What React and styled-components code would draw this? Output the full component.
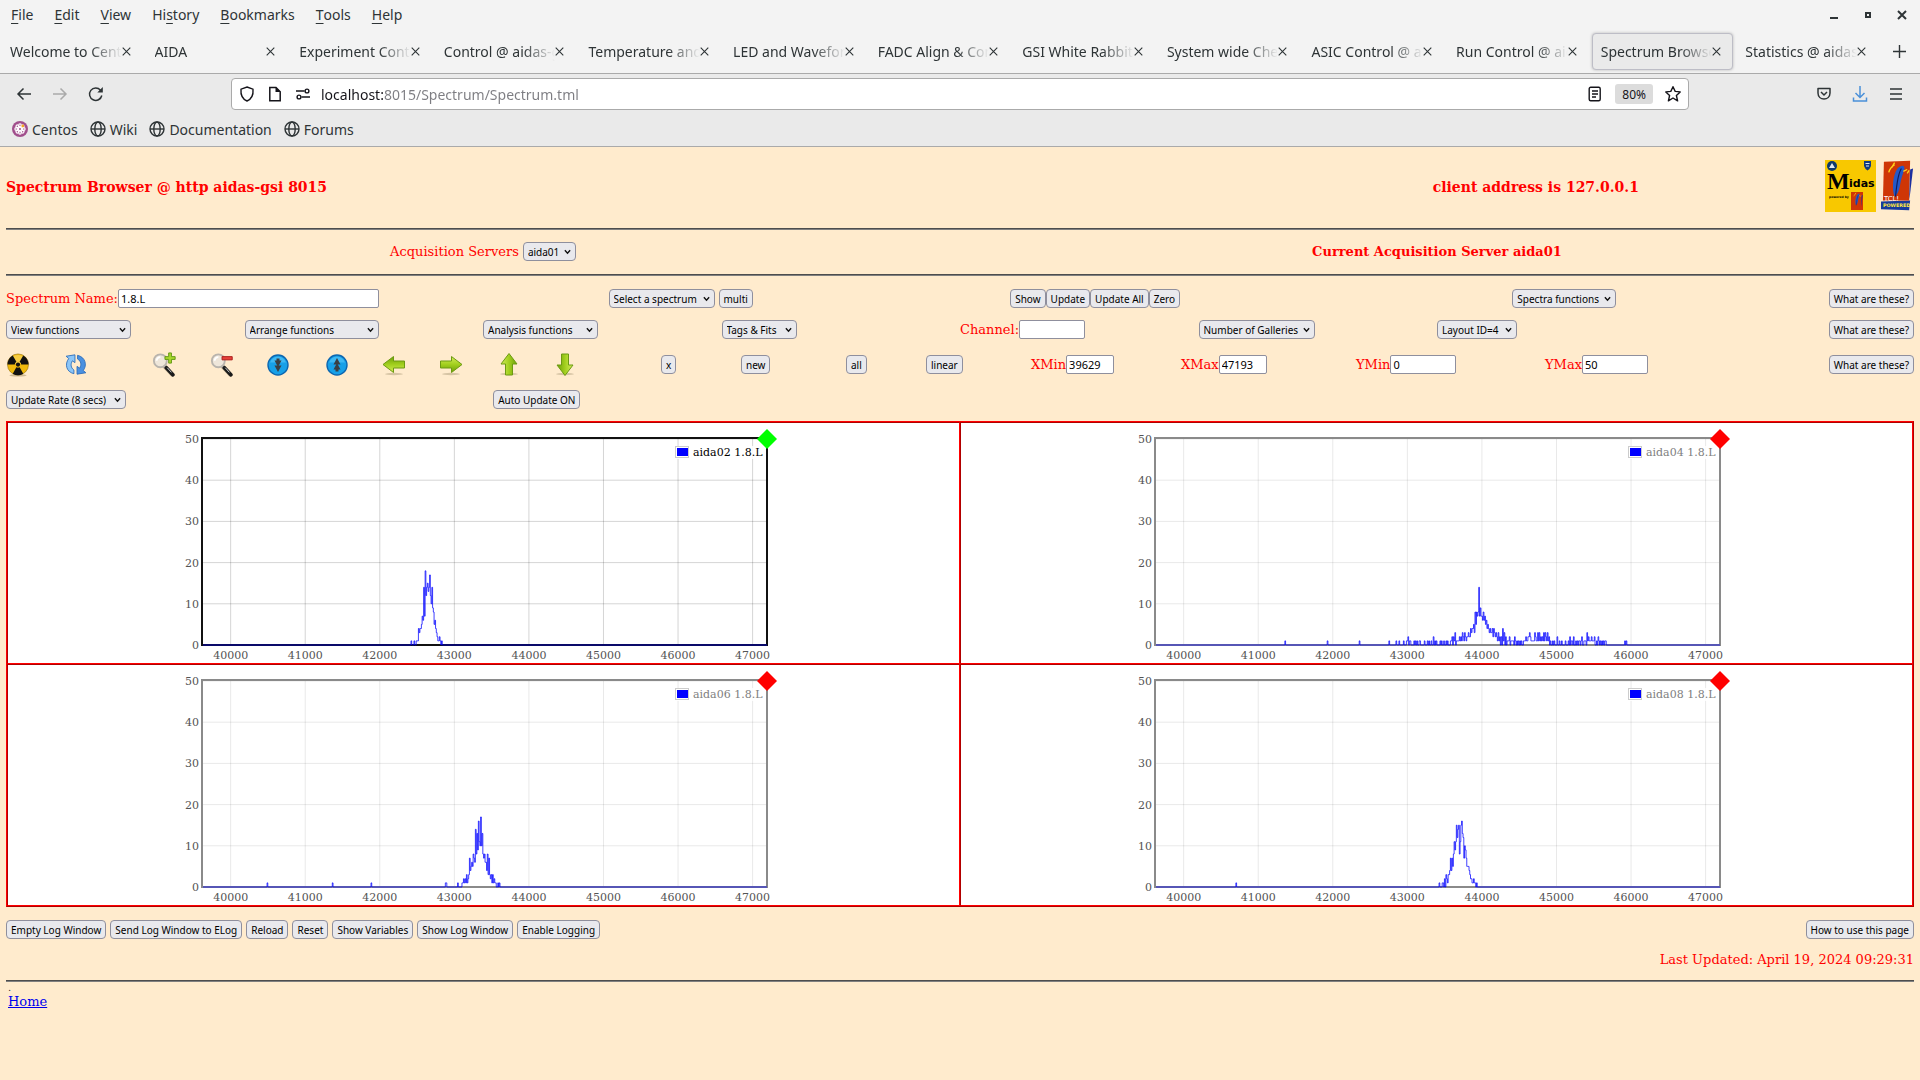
import React from "react";
import styled, { createGlobalStyle } from "styled-components";

const AXIS = { xMin: 39629, xMax: 47193, yMax: 50 };
const PLOT = { left: 20, top: 16, width: 564, height: 206 };
const BIN = 10;

const TABS = [
    "Welcome to CentOS",
    "AIDA",
    "Experiment Control",
    "Control @ aidas-gsi",
    "Temperature and status",
    "LED and Waveform",
    "FADC Align & Control",
    "GSI White Rabbit",
    "System wide Checks",
    "ASIC Control @ aidas",
    "Run Control @ aidas",
    "Spectrum Browser",
    "Statistics @ aidas-gsi",
];

const MENUS = [
    ["", "F", "ile"],
    ["", "E", "dit"],
    ["", "V", "iew"],
    ["Hi", "s", "tory"],
    ["", "B", "ookmarks"],
    ["", "T", "ools"],
    ["", "H", "elp"],
];

// each run is a first channel followed by the counts of the bins after it
const SPECTRA = [
    {
        name: "aida02 1.8.L",
        active: true,
        runs: [
            [42418, [1, 0, 0, 0, 1, 0, 0, 1, 1, 1, 4, 3, 4, 4, 5, 7, 6, 14, 7, 18, 12, 14, 15, 13, 14, 17, 12, 10, 14, 9, 8, 5, 6, 4, 3, 2, 1, 1, 2, 1, 0, 1]],
        ],
    },
    {
        name: "aida04 1.8.L",
        runs: [
            [41357, [1]],
            [41925, [1]],
            [42354, [1]],
            [42752, [1]],
            [42837, [
                0, 1, 0, 0, 0, 1, 0, 0, 0, 0, 0, 1, 0, 0, 0, 1, 1, 2, 0, 1, 1, 0, 0, 0, 0,
                1, 0, 1, 0, 1, 0, 0, 1, 1, 0, 0, 0, 0, 0, 1, 0, 0, 0, 1, 0, 1, 0, 0, 1, 0,
                0, 2, 0, 1, 0, 1, 0, 0, 0, 0, 1, 0, 1, 0, 0, 1, 0, 0, 1, 0, 1, 0, 0, 0, 1,
                1, 2, 0, 2, 1, 3, 0, 1, 1, 1, 1, 2, 1, 2, 1, 3, 2, 1, 3, 2, 1, 2, 2, 3, 2,
                2, 4, 3, 4, 4, 5, 3, 8, 5, 8, 7, 8, 14, 7, 9, 7, 7, 6, 8, 6, 7, 5, 6, 4, 5,
                4, 3, 4, 3, 3, 4, 2, 4, 3, 2, 3, 2, 1, 3, 1, 2, 0, 2, 0, 4, 1, 3, 0, 2, 0,
                1, 1, 1, 2, 0, 1, 1, 1, 1, 0, 2, 1, 0, 1, 0, 1, 0, 1, 0, 1, 0, 0, 1, 1, 1,
                2, 1, 1, 2, 2, 3, 2, 1, 1, 1, 1, 1, 3, 2, 1, 1, 3, 1, 3, 1, 2, 1, 2, 1, 3,
                1, 3, 2, 1, 3, 1, 2, 0, 1, 0, 0, 1, 0, 1, 0, 0, 0, 2, 0, 0, 1, 0, 0, 1, 0,
                0, 0, 0, 1, 0, 0, 0, 1, 0, 2, 0, 1, 1, 0, 2, 0, 0, 1, 0, 1, 0, 1, 1, 0, 1,
                2, 0, 0, 1, 1, 1, 0, 3, 1, 2, 1, 1, 1, 2, 1, 1, 1, 2, 0, 0, 1, 0, 2, 1, 0,
                1, 0, 1, 0, 1, 0, 1, 1, 0,
            ]],
            [45914, [1, 0, 1]],
        ],
    },
    {
        name: "aida06 1.8.L",
        runs: [
            [40488, [1]],
            [41363, [1]],
            [41882, [1]],
            [42879, [1, 1]],
            [43043, [1]],
            [43102, [1, 1, 2, 1, 2, 1, 3, 1, 2, 3, 7, 4, 5, 6, 5, 8, 7, 6, 14, 8, 13, 9, 16, 11, 10, 17, 10, 13, 8, 7, 8, 6, 6, 4, 8, 3, 7, 3, 2, 3, 1, 3, 1, 2, 1, 1, 0, 0, 1, 0, 1]],
        ],
    },
    {
        name: "aida08 1.8.L",
        runs: [
            [40700, [1]],
            [43425, [1]],
            [43457, [0, 1, 1, 0, 2, 0, 3, 2, 1, 3, 3, 4, 7, 4, 7, 5, 8, 11, 9, 11, 15, 12, 14, 15, 8, 11, 15, 16, 13, 12, 7, 10, 9, 7, 5, 5, 5, 4, 3, 2, 2, 1, 1, 2, 1, 1, 0, 1]],
        ],
    },
];

const xOf = (channel) => PLOT.left + ((channel - AXIS.xMin) / (AXIS.xMax - AXIS.xMin)) * PLOT.width;
const yOf = (count) => PLOT.top + PLOT.height - (count / AXIS.yMax) * PLOT.height;

function stepPath(runs) {
    let d = `M${xOf(AXIS.xMin)} ${yOf(0)}`;
    runs.forEach(([start, counts]) => {
        counts.forEach((count, i) => {
            d += `H${xOf(start + i * BIN).toFixed(2)}V${yOf(count).toFixed(2)}`;
        });
        d += `H${xOf(start + counts.length * BIN).toFixed(2)}V${yOf(0)}`;
    });
    return d + `H${xOf(AXIS.xMax)}`;
}

function Spectrum({ name, active, runs }) {
    const ticksX = [40000, 41000, 42000, 43000, 44000, 45000, 46000, 47000];
    const ticksY = [0, 10, 20, 30, 40, 50];
    const right = PLOT.left + PLOT.width;
    const bottom = PLOT.top + PLOT.height;
    const grid = active ? "rgba(0,0,0,0.17)" : "rgba(0,0,0,0.09)";
    return (
        <Plot viewBox="0 0 601 240" role="img" aria-label={name}>
            {ticksX.map((t) => (
                <React.Fragment key={t}>
                    <line x1={xOf(t)} x2={xOf(t)} y1={PLOT.top} y2={bottom} stroke={grid} />
                    <text x={xOf(t)} y={bottom + 14} textAnchor="middle">{t}</text>
                </React.Fragment>
            ))}
            {ticksY.map((t) => (
                <React.Fragment key={t}>
                    <line x1={PLOT.left} x2={right} y1={yOf(t)} y2={yOf(t)} stroke={grid} />
                    <text x={PLOT.left - 4} y={yOf(t) + 4} textAnchor="end">{t}</text>
                </React.Fragment>
            ))}
            <rect x={PLOT.left - 1} y={PLOT.top - 1} width={PLOT.width + 1} height={PLOT.height + 1} fill="none" stroke={active ? "#111" : "#8a8a8a"} strokeWidth="2" />
            <path d={stepPath(runs)} fill="none" stroke="#00f" strokeOpacity="0.75" />
            <rect x="492" y="23" width="86" height="13" fill="#fff" fillOpacity="0.85" />
            <rect x="492.5" y="23.5" width="13" height="11" fill="#fff" stroke="#ccc" />
            <rect x="494" y="25" width="11" height="8" fill="#00f" />
            <text x="510" y="33" className={active ? "legend on" : "legend"}>{name}</text>
            <path d={`M${right} ${PLOT.top - 10}l10 10-10 10-10-10z`} fill={active ? "#0f0" : "#f00"} />
        </Plot>
    );
}

function Pick({ label, width }) {
    return (
        <Picker $width={width}>
            <select aria-label={label} defaultValue={label}>
                <option>{label}</option>
            </select>
            <svg width="7" height="6" viewBox="0 0 8 6" fill="none" stroke="#111" strokeWidth="1.6">
                <path d="M1 1l3 3.4L7 1" />
            </svg>
        </Picker>
    );
}

function Field({ id, label, value, width }) {
    return (
        <FieldBox>
            <label htmlFor={id}>{label}</label>
            <TextBox id={id} defaultValue={value} $width={width} />
        </FieldBox>
    );
}

const Globe = () => (
    <svg width="16" height="16" viewBox="0 0 16 16" fill="none" stroke="#2e3436" strokeWidth="1.4">
        <circle cx="8" cy="8" r="7" />
        <ellipse cx="8" cy="8" rx="3.2" ry="7" />
        <path d="M1 8h14" />
    </svg>
);

const CentosMark = () => (
    <svg width="16" height="16" viewBox="0 0 16 16">
        <circle cx="8" cy="8" r="8" fill="#a14f8c" />
        <g fill="none" stroke="#fff" strokeWidth="1.2">
            <circle cx="8" cy="8" r="1.6" />
            {[0, 45, 90, 135, 180, 225, 270, 315].map((a) => (
                <circle key={a} cx="8" cy="4.2" r="1.3" transform={`rotate(${a} 8 8)`} />
            ))}
        </g>
        <circle cx="10.8" cy="5" r="1.4" fill="#f5a623" />
    </svg>
);

const CloseMark = () => (
    <svg width="9" height="9" viewBox="0 0 9 9" stroke="#2e3436" strokeWidth="1.1">
        <path d="M.7.7l7.6 7.6M8.3.7L.7 8.3" />
    </svg>
);

function GreenArrow({ turn }) {
    return (
        <svg width="26" height="25" viewBox="0 0 26 25">
            <defs>
                <linearGradient id={`green${turn}`} x1="0" y1="0" x2="0" y2="1">
                    <stop offset="0" stopColor="#d3ec5a" />
                    <stop offset="0.5" stopColor="#a2cf1e" />
                    <stop offset="1" stopColor="#6da008" />
                </linearGradient>
            </defs>
            <ellipse cx="13" cy="22" rx="9" ry="1.2" fill="#8a7a58" opacity="0.35" />
            <path d="M2.500 9h11V4.500l10.500 8-10.500 8V16h-11z" fill={`url(#green${turn})`} stroke="#6c9a12" transform={`rotate(${turn} 13 12.5)`} />
        </svg>
    );
}

function Magnifier({ plus }) {
    return (
        <svg width="25" height="25" viewBox="0 0 26 27">
            <path d="M13.5 16l8 8.5" stroke="#7a6a50" strokeOpacity="0.5" strokeWidth="4.5" strokeLinecap="round" />
            <path d="M13 15l2.5 2.5" stroke="#b0b0b0" strokeWidth="3" />
            <path d="M15 17l7 7.5" stroke="#1a1a1a" strokeWidth="4" strokeLinecap="round" />
            <path d="M16 17l4.5 5" stroke="#ddd" strokeWidth="1" />
            <circle cx="8.5" cy="9.5" r="7" fill="#eee6da" stroke="#b9b4ad" strokeWidth="2" />
            <path d="M4.5 9.5a4 4 0 0 1 4-4" fill="none" stroke="#fff" strokeWidth="2" />
            {plus ? (
                <path d="M17.5 1h3v4h4v3h-4v4h-3V8h-4V5h4z" fill="#a8d82a" stroke="#5f9510" />
            ) : (
                <path d="M12.500 5h11v3.500h-11z" fill="#e8403a" stroke="#a81a18" />
            )}
        </svg>
    );
}

function BlueDisc({ up }) {
    return (
        <svg width="22" height="22" viewBox="0 1.500 22 22">
            <circle cx="11" cy="12.500" r="10" fill="#17a0e8" stroke="#0c66b0" strokeWidth="1.4" />
            <path d="M3 10a8.500 8.500 0 0 1 16 0z" fill="#58c8fa" opacity="0.6" />
            <g transform={up ? undefined : "rotate(180 11 12.5)"} fill="#3a3f44">
                <path d="M11 5.500l3.500 6.500h-7z" />
                <path d="M11 10.500l3.500 6.500h-2v2h-3v-2h-2z" />
            </g>
        </svg>
    );
}

const Radiation = () => (
    <svg width="24" height="24" viewBox="0 0 25 25">
        <ellipse cx="12.500" cy="23.200" rx="9" ry="1.300" fill="#9c865a" opacity="0.5" />
        <circle cx="12.500" cy="12" r="11" fill="#efb90d" stroke="#8f6a00" strokeWidth="0.600" />
        <path d="M3 9a10 10 0 0 1 19 0c-5 3-14 3-19 0z" fill="#ffe27a" opacity="0.5" />
        {[60, 180, 300].map((a) => (
            <path key={a} d="M10.800 14.900L7 21.500a11 11 0 0 0 11 0L14.200 14.900a3.400 3.400 0 0 1-3.400 0z" fill="#111" transform={`rotate(${a + 60} 12.500 12)`} />
        ))}
        <circle cx="12.500" cy="12" r="2.200" fill="#111" />
    </svg>
);

const Refresh = () => (
    <svg width="26" height="23" viewBox="0 0 25 25" preserveAspectRatio="none" strokeLinejoin="round">
        <g fill="#8cc6f8" stroke="#2c6cb8" strokeWidth="0.900">
            <path d="M10.500 22.500C3 20.500 1.500 12 5.500 6L3 3.500 11.500 2v8.500L9 8.500c-2 4-1.500 7.500 1.500 10z" />
            <path d="M14 2.500c7.500 2 9.500 10.500 5.500 16.500l2.500 2.500-8.500 1.500v-8.500l2.500 2c2-4 1.500-7.500-2-10z" fill="#4a90e0" />
        </g>
    </svg>
);

function TclFeather() {
    return (
        <g>
            <path d="M3 1l27-1-1 41-27 0z" fill="#cf3606" />
            <path d="M30 9l3-1-3 26-1 6z" fill="#1c2fa0" />
            <path d="M14 37c-3-8-2-22 3-29 4-4 8-4 7 1-1 4-3 8-4 14-1 6-2 11-6 14z" fill="#2458c8" />
            <path d="M21 8c-4 6-5 18-6 29" fill="none" stroke="#0e1c60" strokeWidth="1.200" />
            <path d="M8 12c1-4 3-6 6-8M11 7l3-5M23 11l4-2M27 13l2-3" fill="none" stroke="#ffd21a" strokeWidth="1.400" />
        </g>
    );
}

const MidasLogo = () => (
    <svg width="51" height="52" viewBox="0 0 51 52">
        <rect width="51" height="52" fill="#f8c800" />
        <circle cx="7" cy="6" r="5" fill="#0d3a6c" />
        <path d="M4 8l3-5 3 5z" fill="#dfe8f0" />
        <path d="M39 1h7v5q-1 3-3.500 4.500Q40 9 39 6z" fill="#123a80" />
        <path d="M40.500 3.500h4M41 6h3" stroke="#dfe8f0" />
        <text x="2" y="29" fontFamily="'Liberation Serif', serif" fontWeight="700" fontSize="24">M</text>
        <text x="24" y="27" fontFamily="'DejaVu Sans', sans-serif" fontWeight="700" fontSize="11">idas</text>
        <text x="4" y="38" fontFamily="'DejaVu Sans', sans-serif" fontWeight="700" fontSize="3">powered by</text>
        <svg x="26" y="32" width="12" height="18" viewBox="0 0 34 50" preserveAspectRatio="none">
            <rect width="34" height="50" fill="#cf3606" />
            <TclFeather />
        </svg>
    </svg>
);

const TclLogo = () => (
    <svg width="33" height="52" viewBox="0 0 34 52">
        <path d="M0 42l30-1-1 10-29-1z" fill="#163a9c" />
        <TclFeather />
        <text x="3" y="41" fontFamily="'DejaVu Sans', sans-serif" fontSize="7" fill="#fff">TCL!</text>
        <text x="2" y="48" fontFamily="'DejaVu Sans', sans-serif" fontWeight="700" fontSize="5" fill="#ffe640">POWERED</text>
    </svg>
);

function Browser() {
    return (
        <>
            <TopStrip>
                <MenuBar>
                    {MENUS.map(([before, key, after]) => (
                        <PlainButton key={key + after}>{before}<u>{key}</u>{after}</PlainButton>
                    ))}
                    <WindowButtons>
                        <PlainButton aria-label="Minimise">
                            <svg width="10" height="10" viewBox="0 0 10 10"><path d="M1 7h8v2H1z" fill="#2e3436" /></svg>
                        </PlainButton>
                        <PlainButton aria-label="Maximise">
                            <svg width="10" height="10" viewBox="0 0 10 10"><path d="M3 3h4v4H3z" fill="none" stroke="#2e3436" strokeWidth="2" /></svg>
                        </PlainButton>
                        <PlainButton aria-label="Close window">
                            <svg width="10" height="10" viewBox="0 0 10 10"><path d="M1 1l8 8M9 1L1 9" stroke="#2e3436" strokeWidth="2" /></svg>
                        </PlainButton>
                    </WindowButtons>
                </MenuBar>
                <TabRow>
                    {TABS.map((title) => (
                        <Tab key={title} $active={title === "Spectrum Browser"}>
                            <TabTitle>{title}</TabTitle>
                            <PlainButton aria-label={`Close ${title}`}><CloseMark /></PlainButton>
                        </Tab>
                    ))}
                    <NewTab aria-label="New tab">
                        <svg width="13" height="13" viewBox="0 0 13 13" stroke="#2e3436" strokeWidth="1.400"><path d="M6.500 0v13M0 6.500h13" /></svg>
                    </NewTab>
                </TabRow>
            </TopStrip>
            <NavBar>
                <NavButtons>
                    <PlainButton aria-label="Back">
                        <svg width="16" height="16" viewBox="0 0 16 16" fill="none" stroke="#2e3436" strokeWidth="1.500"><path d="M15 8H2M7.500 2.500L2 8l5.500 5.500" /></svg>
                    </PlainButton>
                    <PlainButton aria-label="Forward">
                        <svg width="16" height="16" viewBox="0 0 16 16" fill="none" stroke="#aaa" strokeWidth="1.500"><path d="M1 8h13M8.500 2.500L14 8l-5.500 5.500" /></svg>
                    </PlainButton>
                    <PlainButton aria-label="Reload">
                        <svg width="16" height="16" viewBox="0 0 16 16" fill="none" stroke="#2e3436" strokeWidth="1.500">
                            <path d="M13.800 9.500A6.200 6.200 0 1 1 12.500 4.200" />
                            <path d="M14.800 1v5.500H9.300z" fill="#2e3436" stroke="none" />
                        </svg>
                    </PlainButton>
                </NavButtons>
                <AddressBar>
                    <svg width="16" height="16" viewBox="0 0 16 16" fill="none" stroke="#15141a" strokeWidth="1.400"><path d="M8 1l6 2.200c.5 5.500-1.500 9.800-6 11.800C3.500 13 1.500 8.700 2 3.200z" /></svg>
                    <svg width="16" height="16" viewBox="0 0 16 16" fill="none" stroke="#15141a" strokeWidth="1.500"><path d="M2.800 1.500h6.200l4.200 4.200v9H2.800z" /><path d="M8.500 1v5h5z" fill="#15141a" stroke="none" /></svg>
                    <svg width="16" height="16" viewBox="0 0 16 16" fill="none" stroke="#15141a" strokeWidth="1.400"><path d="M1 5h8.500M6.500 11H15" /><circle cx="12" cy="5" r="1.900" /><circle cx="4" cy="11" r="1.900" /></svg>
                    <UrlInput aria-label="Address" defaultValue="localhost:8015/Spectrum/Spectrum.tml" />
                    <svg width="16" height="16" viewBox="0 0 16 16" fill="none" stroke="#15141a" strokeWidth="1.400"><rect x="2.200" y="1.200" width="11" height="13.500" rx="1.500" /><path d="M5 5h6M5 8h6M5 11h4" /></svg>
                    <ZoomBadge>80%</ZoomBadge>
                    <svg width="16" height="16" viewBox="1 1 16 16" fill="none" stroke="#15141a" strokeWidth="1.400" strokeLinejoin="round"><path d="M9 1.700l2.200 4.700 5 .5-3.800 3.600 1.200 5.300L9 13l-4.600 2.800 1.200-5.300-3.800-3.600 5-.5z" /></svg>
                </AddressBar>
                <NavTools>
                    <PlainButton aria-label="Save to Pocket">
                        <svg width="16" height="16" viewBox="0 0 16 16" fill="none" stroke="#2e3436" strokeWidth="1.500"><path d="M2 2.500h12v4.500c0 8-12 8-12 0z" strokeLinejoin="round" /><path d="M5 6l3 3 3-3" /></svg>
                    </PlainButton>
                    <PlainButton aria-label="Downloads">
                        <svg width="16" height="17" viewBox="0 0 16 17" fill="none" stroke="#4a90d9" strokeWidth="1.500"><path d="M8 0v11M3.500 7L8 11.500 12.500 7M1.500 11.500v3.500h13v-3.500" /></svg>
                    </PlainButton>
                    <PlainButton aria-label="Application menu">
                        <svg width="16" height="16" viewBox="0 0 16 16" stroke="#2e3436" strokeWidth="1.500"><path d="M2 3h12M2 8h12M2 13h12" /></svg>
                    </PlainButton>
                </NavTools>
            </NavBar>
            <Bookmarks>
                <a href="#centos"><CentosMark />Centos</a>
                <a href="#wiki"><Globe />Wiki</a>
                <a href="#docs"><Globe />Documentation</a>
                <a href="#forums"><Globe />Forums</a>
            </Bookmarks>
        </>
    );
}

export default function App() {
    return (
        <>
            <GlobalStyle />
            <Browser />
            <Page>
                <Header>
                    <h3>Spectrum Browser @ http aidas-gsi 8015</h3>
                    <h3>client address is 127.0.0.1</h3>
                    <Logos><MidasLogo /><TclLogo /></Logos>
                </Header>
                <Rule />
                <ServerRow>
                    <div>
                        Acquisition Servers
                        <Pick label="aida01" width={53} />
                    </div>
                    <strong>Current Acquisition Server aida01</strong>
                </ServerRow>
                <Rule />
                <Controls>
                    <Row $columns="6fr 4fr 5fr 4fr">
                        <Field id="name" label="Spectrum Name:" value="1.8.L" width={261} />
                        <Group $gap={4}>
                            <Pick label="Select a spectrum" width={106} />
                            <Button>multi</Button>
                        </Group>
                        <Group>
                            <Button>Show</Button>
                            <Button>Update</Button>
                            <Button>Update All</Button>
                            <Button>Zero</Button>
                        </Group>
                        <Split>
                            <Pick label="Spectra functions" width={104} />
                            <Button>What are these?</Button>
                        </Split>
                    </Row>
                    <Row $columns="repeat(8, 1fr)">
                        <Pick label="View functions" width={125} />
                        <Pick label="Arrange functions" width={134} />
                        <Pick label="Analysis functions" width={115} />
                        <Pick label="Tags & Fits" width={75} />
                        <Field id="channel" label="Channel:" value="" width={66} />
                        <Pick label="Number of Galleries" width={116} />
                        <Pick label="Layout ID=4" width={80} />
                        <Split $end><Button>What are these?</Button></Split>
                    </Row>
                    <Row $columns="57fr 89fr 58fr 57fr 59fr 55fr 57fr 58fr 56fr 109fr 80fr 105fr 80fr 105fr 150fr 175fr 189fr 369fr">
                        <IconButton aria-label="Clear"><Radiation /></IconButton>
                        <IconButton aria-label="Refresh"><Refresh /></IconButton>
                        <IconButton aria-label="Zoom in"><Magnifier plus /></IconButton>
                        <IconButton aria-label="Zoom out"><Magnifier /></IconButton>
                        <IconButton aria-label="Compress"><BlueDisc /></IconButton>
                        <IconButton aria-label="Expand"><BlueDisc up /></IconButton>
                        <IconButton aria-label="Left"><GreenArrow turn={180} /></IconButton>
                        <IconButton aria-label="Right"><GreenArrow turn={0} /></IconButton>
                        <IconButton aria-label="Up"><GreenArrow turn={270} /></IconButton>
                        <IconButton aria-label="Down"><GreenArrow turn={90} /></IconButton>
                        <Button>x</Button>
                        <Button>new</Button>
                        <Button>all</Button>
                        <Button>linear</Button>
                        <Field id="xmin" label="XMin" value="39629" width={48} />
                        <Field id="xmax" label="XMax" value="47193" width={48} />
                        <Field id="ymin" label="YMin" value="0" width={66} />
                        <Split>
                            <Field id="ymax" label="YMax" value="50" width={66} />
                            <Button>What are these?</Button>
                        </Split>
                    </Row>
                    <Row $columns="12fr 35fr">
                        <Pick label="Update Rate (8 secs)" width={120} />
                        <Button>Auto Update ON</Button>
                    </Row>
                </Controls>
                <Gallery>
                    {SPECTRA.map((s) => (
                        <Cell key={s.name}><Spectrum {...s} /></Cell>
                    ))}
                </Gallery>
                <Split>
                    <Group $gap={4}>
                        <Button>Empty Log Window</Button>
                        <Button>Send Log Window to ELog</Button>
                        <Button>Reload</Button>
                        <Button>Reset</Button>
                        <Button>Show Variables</Button>
                        <Button>Show Log Window</Button>
                        <Button>Enable Logging</Button>
                    </Group>
                    <Button>How to use this page</Button>
                </Split>
                <Updated>Last Updated: April 19, 2024 09:29:31</Updated>
                <Rule />
                <Footer>
                    <small>.</small>
                    <a href="#home">Home</a>
                </Footer>
            </Page>
        </>
    );
}

const GlobalStyle = createGlobalStyle`
    * {
        box-sizing: border-box;
    }
    body {
        margin: 0;
        background: #ffebcd;
        font-family: "DejaVu Serif", serif;
        font-size: 13px;
    }
    svg {
        display: block;
        flex: none;
    }
    button, input, select {
        font-family: "Noto Sans", sans-serif;
    }
`;

const PlainButton = styled.button`
    display: flex;
    padding: 0;
    border: 0;
    background: none;
    color: #2e3436;
    font-size: 14px;
    line-height: 20px;
    u {
        text-underline-offset: 3px;
    }
`;

const TopStrip = styled.header`
    background: #f3f3f3;
    border-bottom: 1px solid #aaa;
`;

const MenuBar = styled.nav`
    display: flex;
    align-items: center;
    gap: 21px;
    height: 30px;
    padding: 0 13px 0 11px;
`;

const WindowButtons = styled.div`
    display: flex;
    gap: 24px;
    margin-left: auto;
`;

const TabRow = styled.div`
    display: flex;
    gap: 3px;
    padding: 3px 14px 3px 1px;
`;

const Tab = styled.div`
    display: flex;
    align-items: center;
    flex: 1 1 0;
    min-width: 0;
    height: 37px;
    padding: 0 11px 0 8px;
    border: 1px solid ${(p) => (p.$active ? "#bdbdc6" : "transparent")};
    border-radius: 4px;
    background: ${(p) => (p.$active ? "#eaeaea" : "none")};
    box-shadow: ${(p) => (p.$active ? "0 0 3px rgba(0, 0, 0, 0.25)" : "none")};
`;

const TabTitle = styled.span`
    flex: 1;
    overflow: hidden;
    white-space: nowrap;
    color: #2e3436;
    font-family: "Noto Sans", sans-serif;
    font-size: 14px;
    mask-image: linear-gradient(to left, transparent, #000 32px);
`;

const NewTab = styled(PlainButton)`
    align-self: center;
    margin-left: 12px;
`;

const NavBar = styled.div`
    display: flex;
    align-items: center;
    padding: 4px 16px;
    background: #eaeaea;
`;

const NavButtons = styled.div`
    display: flex;
    gap: 20px;
    width: 215px;
`;

const AddressBar = styled.div`
    display: flex;
    align-items: center;
    flex: 1;
    gap: 12px;
    height: 32px;
    padding: 0 7px;
    border: 1px solid #aaa;
    border-radius: 4px;
    background: #fff;
`;

const UrlInput = styled.input`
    flex: 1;
    min-width: 0;
    margin-left: -2px;
    padding: 0;
    border: 0;
    outline: 0;
    color: transparent;
    background: linear-gradient(to right, #15141a 63px, #7d7d82 63px);
    background-clip: text;
    -webkit-background-clip: text;
    font-size: 14px;
`;

const ZoomBadge = styled.button`
    height: 20px;
    padding: 0 7px;
    border: 0;
    border-radius: 3px;
    background: #dcdcdc;
    color: #15141a;
    font-size: 12px;
`;

const NavTools = styled.div`
    display: flex;
    justify-content: flex-end;
    gap: 20px;
    width: 215px;
`;

const Bookmarks = styled.nav`
    display: flex;
    align-items: center;
    gap: 12px;
    height: 33px;
    padding: 0 12px 2px;
    border-bottom: 1px solid #aaa;
    background: #eaeaea;
    a {
        display: flex;
        align-items: center;
        gap: 4px;
        color: #2e3436;
        font-family: "Noto Sans", sans-serif;
        font-size: 14px;
        text-decoration: none;
    }
`;

const Page = styled.main`
    padding: 0 6px;
    color: #f00;
    line-height: 16px;
`;

const Header = styled.div`
    display: grid;
    grid-template-columns: 40fr 11fr auto;
    align-items: center;
    padding: 13px 0 16px;
    h3 {
        margin: 0;
        padding-top: 2px;
        font-size: 14px;
    }
`;

const Logos = styled.div`
    display: flex;
    gap: 5px;
`;

const Rule = styled.hr`
    margin: 0;
    border: 0;
    border-top: 1px solid #4d4d4d;
    border-bottom: 1px solid #808080;
`;

const ServerRow = styled.div`
    display: grid;
    grid-template-columns: 1fr 1fr;
    align-items: center;
    justify-items: center;
    padding: 12px 0 13px;
    div {
        display: flex;
        align-items: center;
        gap: 4px;
    }
`;

const Controls = styled.div`
    display: flex;
    flex-direction: column;
    gap: 12px;
    padding: 13px 0 12px;
`;

const Row = styled.div`
    display: grid;
    grid-template-columns: ${(p) => p.$columns};
    align-items: center;
    justify-items: start;
`;

const Group = styled.div`
    display: flex;
    gap: ${(p) => p.$gap || 0}px;
`;

const Split = styled.div`
    display: flex;
    justify-content: ${(p) => (p.$end ? "flex-end" : "space-between")};
    width: 100%;
`;

const Button = styled.button`
    height: 19px;
    padding: 0 4px;
    border: 1px solid #8f8f9d;
    border-radius: 4px;
    background: #e9e9ed;
    color: #000;
    font-size: 10px;
    line-height: 16px;
    white-space: nowrap;
`;

const Picker = styled.span`
    position: relative;
    display: inline-flex;
    width: ${(p) => p.$width}px;
    select {
        appearance: none;
        width: 100%;
        height: 19px;
        padding: 0 4px;
        border: 1px solid #8f8f9d;
        border-radius: 4px;
        background: #e9e9ed;
        color: #000;
        font-size: 10px;
    }
    svg {
        position: absolute;
        top: 7px;
        right: 5px;
        pointer-events: none;
    }
`;

const FieldBox = styled.div`
    display: flex;
    align-items: center;
    white-space: nowrap;
`;

const TextBox = styled.input`
    width: ${(p) => p.$width}px;
    height: 19px;
    padding: 0 2px;
    border: 1px solid #8f8f9d;
    border-radius: 2px;
    background: #fff;
    color: #000;
    font-size: 11px;
`;

const IconButton = styled.button`
    display: flex;
    align-items: center;
    height: 27px;
    padding: 0;
    border: 0;
    background: none;
`;

const Gallery = styled.section`
    display: grid;
    grid-template-columns: 1fr 1fr;
    margin-bottom: 13px;
    border: 1px solid;
    border-color: #f00 #b00000 #b00000 #f00;
    background: #fff;
`;

const Cell = styled.div`
    display: flex;
    justify-content: center;
    border: 1px solid;
    border-color: #b00000 #f00 #f00 #b00000;
`;

const Plot = styled.svg`
    width: 601px;
    height: 240px;
    text {
        fill: #545454;
        font-size: 11px;
    }
    .legend {
        fill: #808080;
    }
    .legend.on {
        fill: #000;
    }
`;

const Updated = styled.p`
    margin: 13px 0 12px;
    text-align: right;
`;

const Footer = styled.footer`
    display: flex;
    flex-direction: column;
    align-items: flex-start;
    padding-left: 2px;
    small {
        color: #333;
        font-size: 10px;
        line-height: 12px;
    }
    a {
        color: #00e;
    }
`;
